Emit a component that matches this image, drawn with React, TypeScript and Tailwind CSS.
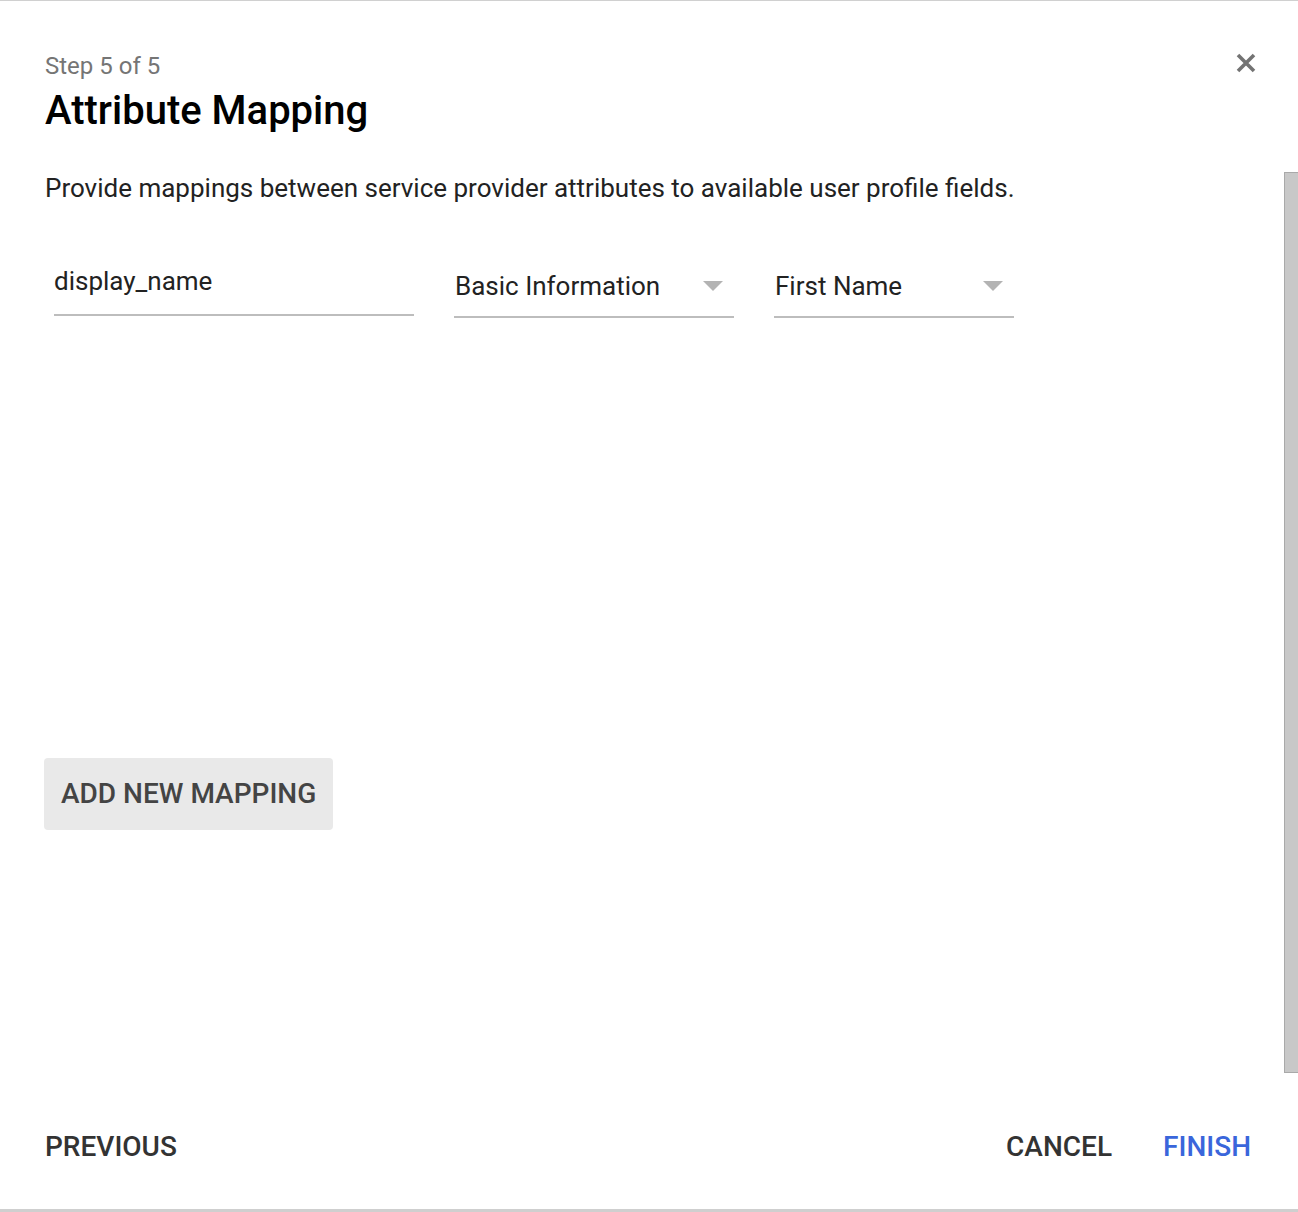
import React from "react"

function Caret() {
  return (
    <svg width="20" height="10" viewBox="0 0 20 10" className="shrink-0">
      <path d="M0 0 L20 0 L10 10 Z" fill="#b3b3b3" />
    </svg>
  )
}

function CloseIcon() {
  return (
    <svg width="22" height="22" viewBox="0 0 22 22">
      <path d="M3 3 L19 19 M19 3 L3 19" stroke="#737373" strokeWidth="3.6" strokeLinecap="butt" />
    </svg>
  )
}

interface SelectProps {
  value: string
  width: string
}

function FakeSelect({ value, width }: SelectProps) {
  return (
    <div className={`${width} mt-[8px] flex flex-col`}>
      <div className="flex items-center justify-between pl-px pr-[11px] h-[60px]">
        <span className="text-[26px] leading-[32px] text-[#222]">{value}</span>
        <Caret />
      </div>
      <div className="h-[2px] bg-[#bdbdbd]" />
    </div>
  )
}

export default function App() {
  return (
    <div
      className="relative w-[1298px] h-[1212px] bg-white border-t border-[#d0d0d0] flex flex-col overflow-hidden"
      style={{ fontFamily: "Roboto, 'Noto Sans', Arial, sans-serif" }}
    >
      {/* close button */}
      <button className="absolute right-[41px] top-[51px] p-0">
        <CloseIcon />
      </button>

      {/* scrollbar */}
      <div className="absolute right-0 top-[171px] w-[14px] h-[901px] bg-[#c8c8c8] border-l border-t border-b border-[#a9a9a9]" />

      <div className="flex-1 flex flex-col pl-[45px] pt-[49px]">
        <div className="text-[24px] leading-[32px] text-[#757575]">Step 5 of 5</div>
        <h1 className="mt-[5px] text-[40px] leading-[48px] font-medium text-black">Attribute Mapping</h1>

        <p className="mt-[37px] text-[26px] leading-[32px] text-[#222]">
          Provide mappings between service provider attributes to available user profile fields.
        </p>

        <div className="mt-[44px] flex items-start gap-10 pl-[9px]">
          <div className="w-[360px] flex flex-col">
            <div className="h-[66px] flex items-center text-[26px] leading-[32px] text-[#222]">display_name</div>
            <div className="h-[2px] bg-[#bdbdbd]" />
          </div>
          <FakeSelect value="Basic Information" width="w-[280px]" />
          <FakeSelect value="First Name" width="w-[240px]" />
        </div>

        <div className="mt-[440px] -ml-px">
          <button className="h-[72px] px-[17px] rounded bg-[#e9e9e9] text-[28px] font-medium text-[#444]">
            ADD NEW MAPPING
          </button>
        </div>
      </div>

      <div className="h-[98px] flex items-start justify-between pl-[45px] pr-[47px] pt-[20px]">
        <button className="text-[28px] leading-[32px] font-medium text-[#333]">PREVIOUS</button>
        <div className="flex gap-[51px]">
          <button className="text-[28px] leading-[32px] font-medium text-[#333]">CANCEL</button>
          <button className="text-[28px] leading-[32px] font-medium text-[#3a66db]">FINISH</button>
        </div>
      </div>
      <div className="h-[3px] bg-[#cfcfcf]" />
    </div>
  )
}
